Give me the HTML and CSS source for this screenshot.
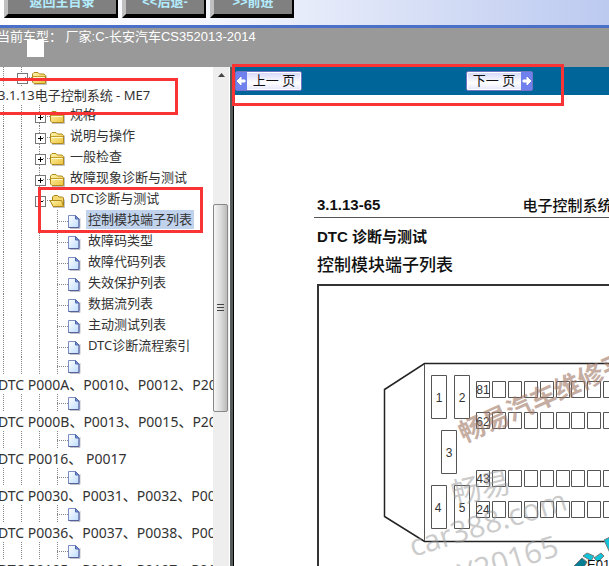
FILE: index.html
```html
<!DOCTYPE html>
<html lang="zh-CN">
<head>
<meta charset="utf-8">
<title>CS35 2013-2014</title>
<link rel="stylesheet" href="styles.css">
</head>
<body>
<svg class="defs" width="0" height="0" aria-hidden="true">
  <defs>
    <linearGradient id="gold" x1="0" y1="0" x2="1" y2="1"><stop offset="0" stop-color="#fff6b0"/><stop offset="1" stop-color="#edc23c"/></linearGradient>
    <linearGradient id="paper" x1="0" y1="0" x2="1" y2="1"><stop offset="0" stop-color="#ffffff"/><stop offset="1" stop-color="#bcdcff"/></linearGradient>
    <symbol id="folder" viewBox="0 0 18 18"><path d="M4 16.500h12.500v-9" fill="none" stroke="#999" opacity=".6"/><path d="M2.500 14V6l1.500-1.500h4L9.500 6H14l1.500 1.500v8H4z" fill="url(#gold)" stroke="#b08a1c"/><path d="M3 8.500h12" stroke="#c69e2c"/><path d="M3.500 9.500h11" stroke="#fffbd0"/></symbol>
    <symbol id="folder-open" viewBox="0 0 18 18"><path d="M5 16.500h11.500v-8" fill="none" stroke="#999" opacity=".6"/><path d="M4.500 14V6l1.500-1.500h3.500L11 6h3.500l1 1v8H5z" fill="#f5d870" stroke="#a98218"/><path d="M2 9.500h11.500l2 6H5z" fill="url(#gold)" stroke="#b08a1c"/></symbol>
    <symbol id="doc" viewBox="0 0 18 18"><path d="M4 16.500h10V6" fill="none" stroke="#889" opacity=".5"/><path d="M2.500 3.500h7l3.500 3.500v8.500H2.500z" fill="url(#paper)" stroke="#7c8cc4"/><path d="M9.500 3.500V7H13z" fill="#7890d0" stroke="#5068b0"/><path d="M2.500 15.500H13V7" fill="none" stroke="#56609c"/></symbol>
  </defs>
</svg>

<div class="app">
  <header class="top">
    <button class="key wide">返回主目录</button>
    <button class="key">&lt;&lt;后退-</button>
    <button class="key">&gt;&gt;前进</button>
  </header>
  <div class="model">当前车型： 厂家:C-长安汽车CS352013-2014<span class="patch"></span></div>

  <main class="main">
    <nav class="side">
      <ul class="tree">
        <li class="row"><i class="g"></i><i class="g box"></i><svg class="ic"><use href="#folder"/></svg></li>
        <li class="wrap title">3.1.13电子控制系统 - ME7</li>
        <li class="row"><i class="g"></i><i class="g"></i><i class="g box plus"></i><svg class="ic"><use href="#folder"/></svg><a href="#">规格</a></li>
        <li class="row"><i class="g"></i><i class="g"></i><i class="g box plus"></i><svg class="ic"><use href="#folder"/></svg><a href="#">说明与操作</a></li>
        <li class="row"><i class="g"></i><i class="g"></i><i class="g box plus"></i><svg class="ic"><use href="#folder"/></svg><a href="#">一般检查</a></li>
        <li class="row"><i class="g"></i><i class="g"></i><i class="g box plus"></i><svg class="ic"><use href="#folder"/></svg><a href="#">故障现象诊断与测试</a></li>
        <li class="row"><i class="g"></i><i class="g"></i><i class="g box"></i><svg class="ic"><use href="#folder-open"/></svg><a href="#">DTC诊断与测试</a></li>
        <li class="row"><i class="g"></i><i class="g"></i><i class="g"></i><i class="g tee"></i><svg class="ic"><use href="#doc"/></svg><a class="on" href="#">控制模块端子列表</a></li>
        <li class="row"><i class="g"></i><i class="g"></i><i class="g"></i><i class="g tee"></i><svg class="ic"><use href="#doc"/></svg><a href="#">故障码类型</a></li>
        <li class="row"><i class="g"></i><i class="g"></i><i class="g"></i><i class="g tee"></i><svg class="ic"><use href="#doc"/></svg><a href="#">故障代码列表</a></li>
        <li class="row"><i class="g"></i><i class="g"></i><i class="g"></i><i class="g tee"></i><svg class="ic"><use href="#doc"/></svg><a href="#">失效保护列表</a></li>
        <li class="row"><i class="g"></i><i class="g"></i><i class="g"></i><i class="g tee"></i><svg class="ic"><use href="#doc"/></svg><a href="#">数据流列表</a></li>
        <li class="row"><i class="g"></i><i class="g"></i><i class="g"></i><i class="g tee"></i><svg class="ic"><use href="#doc"/></svg><a href="#">主动测试列表</a></li>
        <li class="row"><i class="g"></i><i class="g"></i><i class="g"></i><i class="g tee"></i><svg class="ic"><use href="#doc"/></svg><a href="#">DTC诊断流程索引</a></li>
        <li class="row short"><i class="g"></i><i class="g"></i><i class="g"></i><i class="g tee"></i><svg class="ic"><use href="#doc"/></svg></li>
        <li class="wrap"><a href="#">DTC P000A、P0010、P0012、P2088</a></li>
        <li class="row short"><i class="g"></i><i class="g"></i><i class="g"></i><i class="g tee"></i><svg class="ic"><use href="#doc"/></svg></li>
        <li class="wrap"><a href="#">DTC P000B、P0013、P0015、P2090</a></li>
        <li class="row short"><i class="g"></i><i class="g"></i><i class="g"></i><i class="g tee"></i><svg class="ic"><use href="#doc"/></svg></li>
        <li class="wrap"><a href="#">DTC P0016、 P0017</a></li>
        <li class="row short"><i class="g"></i><i class="g"></i><i class="g"></i><i class="g tee"></i><svg class="ic"><use href="#doc"/></svg></li>
        <li class="wrap"><a href="#">DTC P0030、P0031、P0032、P0050</a></li>
        <li class="row short"><i class="g"></i><i class="g"></i><i class="g"></i><i class="g tee"></i><svg class="ic"><use href="#doc"/></svg></li>
        <li class="wrap"><a href="#">DTC P0036、P0037、P0038、P0056</a></li>
        <li class="row short"><i class="g"></i><i class="g"></i><i class="g"></i><i class="g tee"></i><svg class="ic"><use href="#doc"/></svg></li>
        <li class="wrap"><a href="#">DTC P0105、P0106、P0107、P0108</a></li>
      </ul>
      <div class="scroll"><svg class="up" viewBox="0 0 16 16"><path d="M5 10l3.500-4L12 10z" fill="#444"/></svg><div class="thumb"></div></div>
    </nav>

    <section class="view">
      <div class="pager">
        <button class="pg prev"><svg viewBox="0 0 11 18"><path d="M1 9l4-4v3h4v2H5v3z" fill="#fff" stroke="#fff"/></svg><span>上一 页</span></button>
        <button class="pg next"><span>下一 页</span><svg viewBox="0 0 11 18"><path d="M10 9L6 5v3H2v2h4v3z" fill="#fff" stroke="#fff"/></svg></button>
      </div>
      <article class="doc">
        <div class="head"><b>3.1.13-65</b><span>电子控制系统</span></div>
        <h2>DTC 诊断与测试</h2>
        <h1>控制模块端子列表</h1>
        <div class="figure">
          <svg class="plug" width="320" height="300" viewBox="317 284 320 300">
            <g fill="none" stroke="#555">
              <path d="M640 363.500H424.500L384.500 389.500V516.500L424.500 541.500H640" stroke="#222" stroke-width="1.500"/>
              <path d="M424.500 364v177"/>
              <path d="M431.500 375.500h15v43h-15zM454.500 375.500h15v43h-15zM441.500 430.500h15v43h-15zM431.500 485.500h15v43h-15zM454.500 485.500h15v43h-15z"/>
              <g id="line-a"><path d="M476.500 381.500h13v16h-13zM492.500 381.500h13v16h-13zM508.500 381.500h13v16h-13zM524.500 381.500h13v16h-13zM540.500 381.500h13v16h-13zM556.500 381.500h13v16h-13zM571.500 381.500h13v16h-13zM587.500 381.500h13v16h-13zM603.500 381.500h13v16h-13z"/></g>
              <use href="#line-a" y="31"/><use href="#line-a" y="89"/><use href="#line-a" y="120"/>
            </g>
            <g class="nums">
              <text x="439" y="402">1</text><text x="462" y="402">2</text><text x="449" y="457">3</text><text x="438" y="512">4</text><text x="462" y="512">5</text>
              <text x="483" y="394">81</text><text x="483" y="426">62</text><text x="483" y="483">43</text><text x="483" y="514">24</text>
            </g>
            <text class="mark brown" transform="translate(464 443) rotate(-24)">畅易汽车维修平台</text>
            <g class="mark gray">
              <text transform="translate(454 505) rotate(-13)">畅易</text>
              <text transform="translate(413 557) rotate(-17)">car388.com</text>
              <text transform="translate(440 592) rotate(-17)">QY20165</text>
            </g>
            <g stroke="#777">
              <path d="M574 566l8-8 5 4-6 10z" fill="#087e94"/><path d="M583 556l4-3 7 3-3 5z" fill="#12c4da"/><path d="M594 558l7-5 3 3-6 6z" fill="#12c4da"/><path d="M604 540l6-3v16z" fill="#12c4da"/>
            </g>
            <text class="code" x="587" y="569">E01</text>
          </svg>
        </div>
      </article>
    </section>
  </main>
  <i class="note n1"></i><i class="note n2"></i><i class="note n3"></i>
</div>
</body>
</html>
```
FILE: styles.css
```css
* { box-sizing: border-box; }
body { margin: 0; background: #fff; font-family: "Noto Sans", "Noto Sans CJK SC", sans-serif; }
.defs { position: absolute; }
.app { position: relative; display: flex; flex-direction: column; height: 100vh; overflow: hidden; }

.top { display: flex; flex: none; align-items: flex-end; gap: 4px; height: 28px; padding: 0 4px 7px; overflow: hidden;
  background: linear-gradient(90deg, #fff 0, #f4f6fd 35%, #bccaf0 100%); border-bottom: 3px solid #4a70c8; }
.key { flex: none; width: 84px; height: 30px; padding: 0 0 2px; background: #808080; color: #b4ecff;
  border: solid #000; border-width: 3px 2px 4px 4px; border-left-color: #c0c0c0;
  font: bold 13px/20px "Liberation Sans", "Noto Sans CJK SC", sans-serif; }
.wide { width: 114px; }

.model { position: relative; flex: none; height: 39px; background: #999; color: #fff; white-space: pre; text-indent: -3px;
  font: 13px/17px "Liberation Sans", "Noto Sans CJK SC", sans-serif; }
.patch { position: absolute; left: 27px; top: 12px; width: 17px; height: 17px; background: #fff; }

.main { display: flex; flex: 1; min-height: 0; }
.side { display: flex; flex: none; width: 234px; border-right: 1px solid #000; overflow: hidden; background: #fff; box-shadow: inset -3px 0 #555b5b; }
.tree { flex: none; width: 213px; margin: 0; padding: 0; list-style: none; overflow: hidden; color: #333; font-size: 13px; white-space: nowrap; }
.tree a { color: inherit; text-decoration: none; }
.row { display: flex; align-items: center; height: 21px; margin-left: -6px; }
.row:first-child { height: 19px; }
.short { height: 18px; }
.row a { margin: 0 0 2px 2px; padding: 0 2px; line-height: 19px; }
.row .on { background: #c0d2ec; }
.wrap { height: 19px; line-height: 19px; font-size: 14px; text-indent: -2px; }
.title { font-size: 13px; }
.g { position: relative; flex: none; align-self: stretch; width: 18px;
  background: repeating-linear-gradient(#888 0 1px, transparent 1px 2px) 9px 0 / 1px 100% no-repeat; }
.tee::after { content: ""; position: absolute; left: 9px; right: -2px; top: 50%; border-top: 1px dotted #888; }
.box::after { content: ""; position: absolute; left: 13px; right: -2px; top: 50%; border-top: 1px dotted #888; }
.box::before { content: ""; position: absolute; left: 5px; top: calc(50% - 4px); width: 9px; height: 9px; border: 1px solid #777;
  background: linear-gradient(#000, #000) center / 5px 1px no-repeat #fff; }
.plus::before { background: linear-gradient(#000, #000) center / 5px 1px no-repeat, linear-gradient(#000, #000) center / 1px 5px no-repeat #fff; }
.ic { flex: none; width: 18px; height: 18px; }

.scroll { display: flex; flex-direction: column; flex: none; width: 16px; background: #eee; }
.up { width: 16px; height: 16px; }
.thumb { width: 15px; height: 208px; margin-top: 121px; border: 1px solid #888; border-radius: 2px;
  background: repeating-linear-gradient(#444 0 1px, transparent 1px 3px) center / 7px 8px no-repeat, linear-gradient(90deg, #f6f6f6, #ddd 50%, #bbb); }

.view { flex: 1; min-width: 0; overflow: hidden; }
.pager { display: flex; align-items: center; gap: 164px; height: 28px; padding-left: 1px; background: #069; }
.pg { display: flex; align-items: stretch; flex: none; width: 67px; height: 20px; padding: 0; background: linear-gradient(#d4d6fa, #fff 60%, #e4e6fc); border: 1px solid #7474c4; border-radius: 2px; box-shadow: inset 0 0 0 1px #fff;
  color: #111; font: 13px/18px "Liberation Sans", "Noto Sans CJK SC", sans-serif; }
.pg span { flex: 1; }
.pg svg { width: 11px; height: 18px; background: #7080ec; }
.doc { padding: 98px 0 0 83px; color: #111; font-family: "Liberation Sans", "Noto Sans CJK SC", sans-serif; white-space: nowrap; }
.head { display: flex; gap: 142px; height: 25px; margin-left: -3px; padding-left: 3px; border-bottom: 1px solid #555; font-size: 15px; line-height: 26px; font-weight: 500; }
.head b { line-height: 23px; }
h2, h1 { margin: 0; }
h2 { margin-top: 8px; font-size: 15px; line-height: 22px; }
h1 { font-size: 17px; line-height: 24px; margin-top: 6px; font-weight: 500; }
.figure { margin-top: 6px; border: solid #333; border-width: 2px 0 0 2px; }
.plug { display: block; margin: -2px 0 0 -2px; }
.nums { font-size: 12px; fill: #333; text-anchor: middle; }
.mark { font-family: "Open Sans", "Noto Sans CJK SC", sans-serif; }
.brown { font-size: 26px; font-weight: bold; fill: #a07866; opacity: .6; }
.gray { font-size: 30px; fill: #999; opacity: .5; }
.code { font-size: 13px; fill: #111; }

.note { position: absolute; border: 3px solid #fa3434; }
.n1 { left: -3px; top: 78px; width: 181px; height: 37px; }
.n2 { left: 38px; top: 187px; width: 165px; height: 46px; }
.n3 { left: 232px; top: 64px; width: 332px; height: 42px; }
```
